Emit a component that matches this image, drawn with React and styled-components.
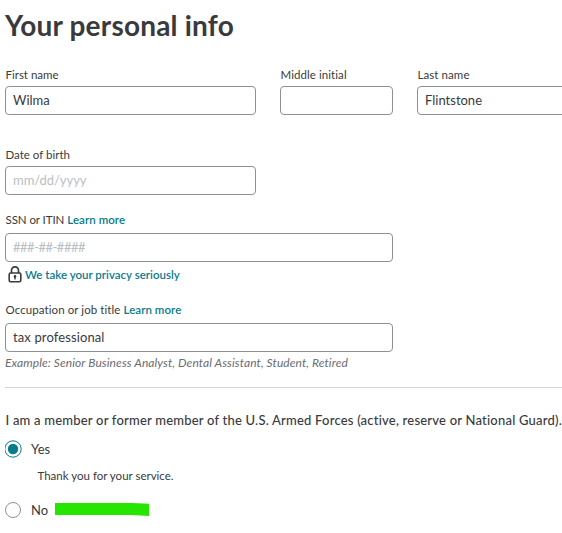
import React from 'react';
import styled, { createGlobalStyle } from 'styled-components';

const Global = createGlobalStyle`
  * { box-sizing: border-box; }
  html, body { margin: 0; background: #fff; overflow: hidden; }
  body { font-family: "Lato", sans-serif; color: #393a3d; }
`;

const Page = styled.main`
  display: flex;
  flex-direction: column;
  width: 562px;
  height: 533px;
  padding-left: 5px;
  overflow: hidden;
`;

const Title = styled.h1`
  margin: 0 0 22px;
  padding-top: 8px;
  height: 45px;
  font-size: 28px;
  line-height: 34px;
  font-weight: 700;
  letter-spacing: 0.2px;
  white-space: nowrap;
`;

const NameRow = styled.div`
  display: grid;
  grid-template-columns: 251px 113px 251px;
  column-gap: 24px;
  margin-bottom: 32px;
`;

const Field = styled.div`
  display: flex;
  flex-direction: column;
  width: ${(p) => p.$width || 'auto'};
  margin-bottom: ${(p) => p.$after || 0}px;
`;

const LabelRow = styled.div`
  display: flex;
  gap: 3px;
  height: ${(p) => p.$height || 19}px;
  padding-left: 0.5px;
`;

const Label = styled.label`
  font-size: 11.5px;
  line-height: 15px;
  white-space: nowrap;
  letter-spacing: ${(p) => p.$track || 0}px;
`;

const TextLink = styled.a`
  color: #077c8c;
  font-size: 11.5px;
  line-height: 15px;
  font-weight: 600;
  white-space: nowrap;
  letter-spacing: ${(p) => p.$track || 0}px;
`;

const Input = styled.input`
  width: 100%;
  height: 29px;
  padding: 0 7px 2px;
  border: 1px solid #8d9096;
  border-radius: 4px;
  background: #fff;
  color: #393a3d;
  font-family: inherit;
  font-size: 13px;
  letter-spacing: ${(p) => p.$track || 0}px;
  outline: 0;
  &::placeholder { color: #babec5; opacity: 1; }
`;

const Privacy = styled.div`
  display: flex;
  align-items: center;
  gap: 3px;
  height: 25px;
  margin-bottom: 15px;
  padding-left: 3px;
`;

const Example = styled.p`
  margin: 3px 0 0;
  height: 16px;
  font-size: 12px;
  line-height: 15px;
  font-style: italic;
  letter-spacing: 0.09px;
  color: #6b6c72;
  white-space: nowrap;
`;

const Divider = styled.hr`
  width: 100%;
  height: 1px;
  margin: 16px 0 23px;
  border: 0;
  background: #d4d7dc;
`;

const Question = styled.p`
  margin: 0 0 11px 0.5px;
  height: 18px;
  font-size: 13px;
  line-height: 18px;
  font-weight: 500;
  letter-spacing: 0.21px;
  white-space: nowrap;
`;

const Option = styled.div`
  display: flex;
  align-items: center;
  height: 18px;
  font-size: 13px;
`;

const OptionText = styled.span`
  margin-left: 9px;
  line-height: 18px;
`;

const Thanks = styled.p`
  margin: 10px 0 18px 32.5px;
  height: 15px;
  font-size: 11.5px;
  line-height: 15px;
  white-space: nowrap;
`;

const Marker = styled.svg`
  display: block;
  margin: 0 0 2px 7px;
`;

function Lock() {
  return (
    <svg width="14" height="17" viewBox="0 0 14 17" fill="none" stroke="#393a3d">
      <path d="M3.5 7V4.4a3.5 3.5 0 0 1 7 0V7" strokeWidth="1.7" />
      <rect x="1.2" y="7" width="11.6" height="8.7" rx="1.5" strokeWidth="1.6" />
      <path d="M7 10.5v3" strokeWidth="1.4" />
      <circle cx="7" cy="10.4" r="1.3" fill="#393a3d" stroke="none" />
    </svg>
  );
}

function Radio({ checked }) {
  return (
    <svg width="17" height="18" viewBox="0 0 17 18" fill="none">
      <circle cx="8" cy="9" r={checked ? 8.2 : 7.5} stroke={checked ? '#077c8c' : '#8d9096'} />
      {checked && <circle cx="8" cy="9" r="5.2" fill="#077c8c" />}
    </svg>
  );
}

export default function App() {
  return (
    <>
      <Global />
      <Page>
        <Title>Your personal info</Title>
        <NameRow>
          <Field>
            <LabelRow><Label>First name</Label></LabelRow>
            <Input defaultValue="Wilma" />
          </Field>
          <Field>
            <LabelRow><Label $track={0.07}>Middle initial</Label></LabelRow>
            <Input />
          </Field>
          <Field>
            <LabelRow><Label $track={0.08}>Last name</Label></LabelRow>
            <Input defaultValue="Flintstone" />
          </Field>
        </NameRow>
        <Field $width="251px" $after={17}>
          <LabelRow><Label>Date of birth</Label></LabelRow>
          <Input placeholder="mm/dd/yyyy" $track={-0.04} />
        </Field>
        <Field $width="388px">
          <LabelRow $height={21}>
            <Label $track={-0.08}>SSN or ITIN</Label>
            <TextLink $track={0.06}>Learn more</TextLink>
          </LabelRow>
          <Input placeholder="###-##-####" $track={-0.5} />
        </Field>
        <Privacy>
          <Lock />
          <TextLink>We take your privacy seriously</TextLink>
        </Privacy>
        <Field $width="388px">
          <LabelRow $height={21}>
            <Label $track={0.08}>Occupation or job title</Label>
            <TextLink $track={0.06}>Learn more</TextLink>
          </LabelRow>
          <Input defaultValue="tax professional" $track={0.12} />
        </Field>
        <Example>Example: Senior Business Analyst, Dental Assistant, Student, Retired</Example>
        <Divider />
        <Question>
          I am a member or former member of the U.S. Armed Forces (active, reserve or National Guard).
        </Question>
        <Option>
          <Radio checked />
          <OptionText>Yes</OptionText>
        </Option>
        <Thanks>Thank you for your service.</Thanks>
        <Option>
          <Radio />
          <OptionText>No</OptionText>
          <Marker width="95" height="14" viewBox="0 0 95 14">
            <path d="M0 1H77L94 1.8V14L77 13H0Z" fill="#26e600" />
          </Marker>
        </Option>
      </Page>
    </>
  );
}
